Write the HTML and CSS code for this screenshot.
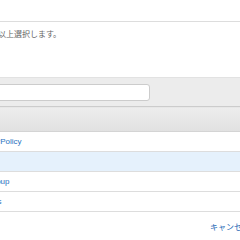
FILE: index.html
```html
<!DOCTYPE html>
<html>

<head>
    <title>Select Policy</title>
    <link rel="stylesheet" href="styles.css">
</head>

<body>
    <div class="dialog">
        <div class="dialog_head">
            <span class="title">ポリシーの選択</span>
        </div>
        <div class="dialog_body">
            <p class="desc">ポリシーを 1 つ以上選択します。</p>
        </div>
        <div class="filter_bar">
            <input class="filter_box" type="text">
        </div>
        <table class="policy_table">
            <tr>
                <th></th>
            </tr>
            <tr>
                <td><a href="#">AdministratorPolicy</a></td>
            </tr>
            <tr class="selected">
                <td><a href="#"></a></td>
            </tr>
            <tr>
                <td><a href="#">DatabaseGroup</a></td>
            </tr>
            <tr>
                <td><a href="#">S3FullAccess</a></td>
            </tr>
        </table>
        <div class="dialog_foot">
            <a class="cancel" href="#">キャンセル</a>
        </div>
    </div>
</body>

</html>
```

FILE: styles.css
```css
body {
    margin: 0;
    width: 240px;
    height: 240px;
    overflow: hidden;
    background: #fff;
    font-family: "Liberation Sans", "Noto Sans CJK JP", sans-serif;
}

.dialog {
    margin-left: -80px;
    width: 340px;
}

.dialog_head {
    height: 21px;
    border-bottom: 1px solid #ddd;
    display: flex;
    align-items: center;
    padding-left: 24px;
}

.title {
    font-size: 8px;
    color: #333;
}

.dialog_body {
    height: 49px;
    padding: 6px 0 0 21px;
}

.desc {
    margin: 0;
    font-size: 8px;
    color: #666;
}

.filter_bar {
    height: 28px;
    background: #ececec;
    border-top: 1px solid #e2e2e2;
    display: flex;
    align-items: center;
    padding-left: 40px;
}

.filter_box {
    width: 188px;
    height: 15px;
    border: 1px solid #ccc;
    border-radius: 3px;
    padding: 0;
    background: #fff;
}

.policy_table {
    width: 100%;
    border-collapse: collapse;
    border-top: 1px solid #ccc;
}

th {
    height: 24px;
    padding: 0;
    background: linear-gradient(#ededed, #e1e1e1);
    border-bottom: 1px solid #d4d4d4;
}

td {
    height: 19px;
    padding: 0 0 0 33px;
    font-size: 8px;
    border-bottom: 1px solid #ddd;
}

.selected td {
    background: #e5f1fc;
}

a {
    color: #2a72c0;
    text-decoration: none;
}

.dialog_foot {
    height: 28px;
    display: flex;
    align-items: center;
    padding-left: 290px;
}

.cancel {
    font-size: 8px;
    color: #1d68b5;
}
```
